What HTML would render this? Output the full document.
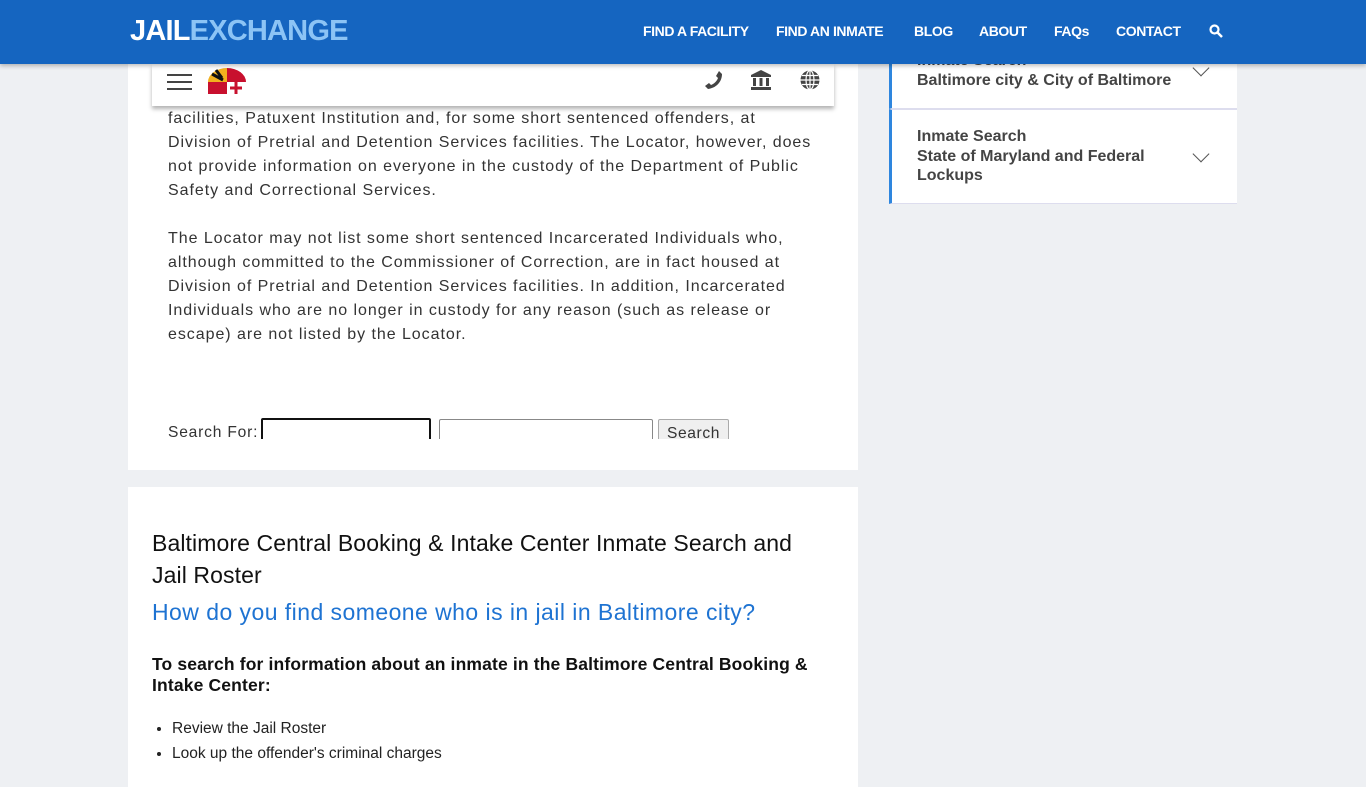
<!DOCTYPE html>
<html><head><meta charset="utf-8"><style>
html,body{margin:0;height:768px}
body{background:#eef0f3;font-family:"Liberation Sans",sans-serif;width:1366px;overflow:hidden;position:relative}
.hdr{position:absolute;top:0;left:0;width:1366px;height:64px;background:#1565c0;box-shadow:0 2px 4px rgba(0,0,0,.25);z-index:5}
.logo{position:absolute;left:130px;top:15px;font-size:29px;font-weight:bold;color:#fff;letter-spacing:-0.8px}
.logo span{color:#8cc4f5}
.nav{position:absolute;top:23px;font-size:14px;font-weight:bold;color:#fff;letter-spacing:-0.4px}
.card{position:absolute;left:128px;width:730px;background:#fff}
.txt{position:absolute;left:168px;white-space:nowrap;font-size:16px;letter-spacing:0.95px;line-height:24px;color:#333}
.tool{position:absolute;left:152px;top:64px;width:682px;height:42px;background:#fff;box-shadow:0 3px 4px rgba(0,0,0,.3);z-index:3}
.side{position:absolute;left:889px;width:345px;background:#fff;border-left:3px solid #2e86de;border-bottom:1px solid #dde;color:#444;font-weight:bold;font-size:16px;line-height:19.5px}
.chev{position:absolute;right:30px;width:11px;height:11px;border-right:1.5px solid #555;border-bottom:1.5px solid #555;transform:rotate(45deg)}
</style></head><body>
<div class="hdr">
<div class="logo">JAIL<span>EXCHANGE</span></div>
<div class="nav" style="left:643px">FIND A FACILITY</div>
<div class="nav" style="left:776px">FIND AN INMATE</div>
<div class="nav" style="left:914px">BLOG</div>
<div class="nav" style="left:979px">ABOUT</div>
<div class="nav" style="left:1054px">FAQs</div>
<div class="nav" style="left:1116px">CONTACT</div>
<svg style="position:absolute;left:1209px;top:24px" width="14" height="14" viewBox="0 0 14 14"><circle cx="5.5" cy="5.5" r="4" stroke="#fff" stroke-width="2.2" fill="none"/><path d="M8.5 8.5L13 13" stroke="#fff" stroke-width="2.5"/></svg>
</div>
<div class="card" style="top:40px;height:430px"></div>
<div class="tool">
<div style="position:absolute;left:15px;top:10px;width:25px;height:2px;background:#444;box-shadow:0 7px 0 #444,0 14px 0 #444"></div>
<svg style="position:absolute;left:56px;top:4px" width="38" height="26" viewBox="0 0 38 26"><path d="M0 26V14A19 14 0 0 1 19 0V14Z" fill="#f2b01e"/><path d="M19 0A19 14 0 0 1 38 14H19Z" fill="#c8102e"/><path d="M0 14H19V26H0Z" fill="#c8102e"/><path d="M19 14H38V26H19Z" fill="#fff"/><path d="M4 6L15 12M8 2L14 10" stroke="#111" stroke-width="3"/><path d="M28 14v12M22 20h12" stroke="#c8102e" stroke-width="3"/></svg>
<svg style="position:absolute;left:552px;top:6px" width="20" height="20" viewBox="0 0 20 20"><path d="M15 1l3 3c0 8-6 14-14 15l-3-3 4-3 2 2c3-1 6-4 7-7l-2-2z" fill="#444"/></svg>
<svg style="position:absolute;left:598px;top:5px" width="22" height="22" viewBox="0 0 22 22"><path d="M11 1L1 6v2h20V6z M3 9h3v8H3z M9.5 9h3v8h-3z M16 9h3v8h-3z M1 18h20v3H1z" fill="#444"/></svg>
<svg style="position:absolute;left:647px;top:5px" width="22" height="22" viewBox="0 0 22 22"><circle cx="11" cy="11" r="9.5" fill="#444"/><path d="M11 1.5v19M1.5 11h19M3 6.5h16M3 15.5h16" stroke="#fff" stroke-width="1.2"/><ellipse cx="11" cy="11" rx="4" ry="9.5" stroke="#fff" stroke-width="1.2" fill="none"/></svg>
</div>
<div class="txt" style="top:107px">facilities, Patuxent Institution and, for some short sentenced offenders, at<br>Division of Pretrial and Detention Services facilities. The Locator, however, does<br>not provide information on everyone in the custody of the Department of Public<br>Safety and Correctional Services.<br><br>The Locator may not list some short sentenced Incarcerated Individuals who,<br>although committed to the Commissioner of Correction, are in fact housed at<br>Division of Pretrial and Detention Services facilities. In addition, Incarcerated<br>Individuals who are no longer in custody for any reason (such as release or<br>escape) are not listed by the Locator.</div>
<div style="position:absolute;left:152px;top:418px;width:682px;height:21px;overflow:hidden">
<span style="position:absolute;left:16px;top:6px;font-size:15.6px;letter-spacing:0.8px;color:#333">Search For:</span>
<div style="position:absolute;left:109px;top:0;width:166px;height:30px;border:2px solid #111;border-radius:2px"></div>
<div style="position:absolute;left:287px;top:1px;width:212px;height:30px;border:1px solid #888;border-radius:2px"></div>
<div style="position:absolute;left:506px;top:1px;width:69px;height:30px;border:1px solid #aaa;background:#efefef;border-radius:2px;font-size:15.6px;letter-spacing:0.6px;color:#333;text-align:center;line-height:28px">Search</div>
</div>
<div class="card" style="top:487px;height:300px">
<div style="position:absolute;left:24px;top:40px;white-space:nowrap;font-size:23px;letter-spacing:0.1px;line-height:32px;color:#111">Baltimore Central Booking &amp; Intake Center Inmate Search and<br>Jail Roster</div>
<div style="position:absolute;left:24px;top:112px;font-size:23px;letter-spacing:0.45px;color:#1e73d2">How do you find someone who is in jail in Baltimore city?</div>
<div style="position:absolute;left:24px;top:167px;white-space:nowrap;font-size:17.5px;letter-spacing:0.15px;line-height:21px;font-weight:bold;color:#111">To search for information about an inmate in the Baltimore Central Booking &amp;<br>Intake Center:</div>
<ul style="position:absolute;left:4px;top:229px;margin:0;padding-left:40px;font-size:15.5px;line-height:25px;color:#222"><li>Review the Jail Roster</li><li>Look up the offender's criminal charges</li></ul>
</div>
<div class="side" style="top:40px;height:68px">
<div style="position:absolute;left:25px;top:11px;color:#444">Inmate Search<br>Baltimore city &amp; City of Baltimore</div>
<div class="chev" style="top:22px"></div></div>
<div class="side" style="top:109px;height:93px;border-top:1px solid #dde">
<div style="position:absolute;left:25px;top:17px">Inmate Search<br>State of Maryland and Federal<br>Lockups</div>
<div class="chev" style="top:38px"></div></div>
</body></html>
